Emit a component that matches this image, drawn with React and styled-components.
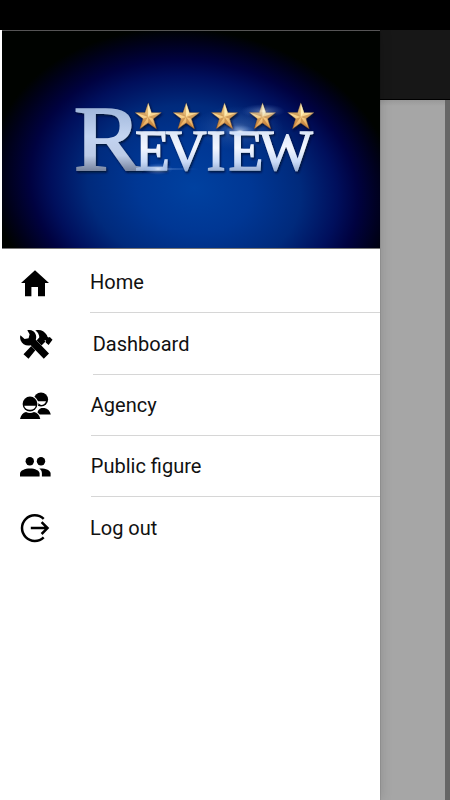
import React from 'react'
import styled, { createGlobalStyle } from 'styled-components';

const GlobalStyle = createGlobalStyle`
  * {
    box-sizing: border-box;
  }
  body {
    margin: 0;
    background: #a6a6a6;
    font-family: Roboto, sans-serif;
  }
`

const Screen = styled.div`
  position: relative;
  width: 450px;
  height: 800px;
  overflow: hidden;
  display: flex;
  flex-direction: column;
  background: #a6a6a6;
`

const StatusBar = styled.div`
  height: 30px;
  flex: none;
  background: #000;
`

const TitleBar = styled.div`
  height: 70px;
  flex: none;
  background: #171717;
  border-bottom: 1px solid #000;
`

const Content = styled.div`
  flex: 1;
  border-right: 5px solid #666;
  background: linear-gradient(#999, #a6a6a6 6px);
`

const Drawer = styled.aside`
  position: absolute;
  top: 30px;
  left: 0;
  bottom: 0;
  width: 380px;
  background: #fff;
  box-shadow: 0 0 12px rgba(0, 0, 0, 0.16), 0 0 1px rgba(0, 0, 0, 0.4);
`

const Banner = styled.div`
  height: 219px;
  padding-left: 1.5px;
  & > svg {
    display: block;
  }
`

const Menu = styled.ul`
  margin: 0;
  padding: 3px 0 0;
  list-style: none;
`

const Item = styled.li`
  display: flex;
  height: 61.35px;
`

const IconBox = styled.span`
  flex: none;
  width: ${props => props.$width}px;
  padding: 11px 0 0 15px;
  & > svg {
    display: block;
  }
`

const Label = styled.span`
  flex: 1;
  padding-top: 18.3px;
  font-size: 20px;
  line-height: 24px;
  white-space: nowrap;
  color: #111;
  border-bottom: ${props => (props.$last ? 'none' : '1px solid #d6d6d6')};
`

function Icon({ children }) {
  return (
    <svg width="40" height="40" viewBox="0 0 40 40">
      {children}
    </svg>
  )
}

const HomeIcon = () => (
  <Icon>
    <path d="M20 7.2 34 20h-4v13.3h-7V24h-6.6v9.3H10V20H6z" />
  </Icon>
)

const ToolsIcon = () => (
  <Icon>
    <path d="M20.300 6.400C25 5 29.300 6.800 31.800 11l.8 1.900 1.200.6 1-.5 2.700 2.700-3.900 5.200-2.900-2.500.2-1.800c-.9-.8-1.800-.7-2.600 0L13.500 34.800l-5-4.500 15.900-16.700c-.2-3.200-1.500-5.700-4.100-7.200z" />
    <path d="M26 11.500l4.500 6-8 8-4-4z" />
    <path
      d="M12.300 6.300c3.800-.9 7.500.9 8.600 4.600.5 1.700.4 3.200-.1 4.800L34 29.600l-5.200 5.200-13-13.600c-4.200 1.200-8.600-.8-10.200-5-.6-1.800-.6-3.400-.2-4.900l4.200 3.800 4-.9 1-3.900z"
      stroke="#fff"
      strokeWidth=".7"
      paintOrder="stroke"
    />
  </Icon>
)

const AgencyIcon = () => (
  <Icon>
    <path d="M22 28.600c.6-4.300 2.500-6.600 5.500-6.600h2c3.200.4 5.400 2.700 6.300 6.600z" />
    <circle cx="26" cy="13.500" r="7.100" />
    <path d="M20 15.200h11c-.6 2.200-2.500 3.700-5 3.700z" fill="#fff" />
    <path
      d="M5 32.900c1-3.800 3-6.200 6-6.900 2.700 1.200 5.300 1.200 8 0 3.300.7 5.400 3.100 6.300 6.900z"
      stroke="#fff"
      strokeWidth="2"
      paintOrder="stroke"
    />
    <circle cx="15" cy="18" r="7.400" stroke="#fff" strokeWidth="2" paintOrder="stroke" />
    <path d="M9.200 19.800h11.600c-.6 2.500-2.700 4-5.800 4s-5.200-1.500-5.800-4z" fill="#fff" />
  </Icon>
)

const PeopleIcon = () => (
  <Icon>
    <circle cx="14.800" cy="14.200" r="4.200" />
    <circle cx="26" cy="14.200" r="4.200" />
    <path d="M5 29.600v-3.200c0-3 5-5 10-5s9.600 2 9.600 5v3.200z" />
    <path d="M24.300 21.500c5.700-.4 11.300 1.700 11.300 4.800v3.300h-8.700v-3.300c0-2-1-3.600-2.600-4.800z" />
  </Icon>
)

const LogoutIcon = () => (
  <Icon>
    <g fill="none" stroke="#000" strokeWidth="2.5">
      <path d="M28.700 10.900A12.800 12.800 0 1 0 28.700 29.300" />
      <path d="M15.800 20.100h16.300M26.600 14.200l5.900 5.900-5.900 5.900" />
    </g>
  </Icon>
)

const STARS = [146.2, 184.2, 222.5, 260.5, 298.8]

// One star, drawn around its own centre, with shaded facets
function Star({ x }) {
  return (
    <g transform={`translate(${x} 87)`}>
      <path
        d="M0-14.300 3.200-4.400H13.300L5.200 1.800 8.400 12 0 5.900-8.400 12-5.200 1.800-13.300-4.400H-3.200z"
        fill="url(#gold)"
        stroke="#392a38"
        strokeWidth=".4"
      />
      <path d="M13-4.400 0 0l5.200 1.800zM8.400 12 0 0v5.900zM-8.400 12 0 0-5.200 1.800zM-13-4.400 0 0-3.200-4.400z" fill="#a05a20" opacity=".42" />
      <path d="M0-14V0l-3.200-4.400z" fill="#b5752d" opacity=".35" />
      <path d="M0-14V0l3.200-4.400z" fill="#fff2bf" opacity=".7" />
    </g>
  )
}

function ReviewLogo() {
  return (
    <svg width="378.5" height="219" viewBox="0 0 378.5 219">
      <defs>
        <radialGradient id="night" gradientUnits="userSpaceOnUse" cx="0" cy="0" r="1" gradientTransform="translate(192 158) rotate(10) scale(206 158)">
          <stop offset="0" stopColor="#0041a0" />
          <stop offset=".28" stopColor="#003794" />
          <stop offset=".52" stopColor="#002a7c" />
          <stop offset=".7" stopColor="#000f5c" />
          <stop offset=".8" stopColor="#000240" />
          <stop offset=".92" stopColor="#00011a" />
          <stop offset="1" stopColor="#000300" />
        </radialGradient>
        <linearGradient id="steel" gradientUnits="userSpaceOnUse" x1="0" y1="77" x2="0" y2="142">
          <stop offset="0" stopColor="#9fb6da" />
          <stop offset=".45" stopColor="#c3d4f1" />
          <stop offset=".75" stopColor="#bccbe6" />
          <stop offset="1" stopColor="#717e99" />
        </linearGradient>
        <linearGradient id="silver" gradientUnits="userSpaceOnUse" x1="0" y1="102" x2="0" y2="142">
          <stop offset="0" stopColor="#dfe8f8" />
          <stop offset=".4" stopColor="#f2f6ff" />
          <stop offset=".75" stopColor="#c9daf7" />
          <stop offset="1" stopColor="#94a9cd" />
        </linearGradient>
        <linearGradient id="gold" x1="0" y1="0" x2="0" y2="1">
          <stop offset="0" stopColor="#fff0ae" />
          <stop offset=".45" stopColor="#fbd993" />
          <stop offset="1" stopColor="#e29a48" />
        </linearGradient>
        <radialGradient id="flare">
          <stop offset="0" stopColor="#fff" stopOpacity=".95" />
          <stop offset=".25" stopColor="#cfe2ff" stopOpacity=".5" />
          <stop offset="1" stopColor="#6da5ff" stopOpacity="0" />
        </radialGradient>
        <filter id="drop" x="-10%" y="-10%" width="120%" height="130%">
          <feDropShadow dx="1" dy="1.5" stdDeviation="1" floodColor="#000726" floodOpacity=".9" />
        </filter>
      </defs>
      <rect width="378.5" height="219" fill="#000300" />
      <rect width="378.5" height="219" fill="url(#night)" />
      <ellipse cx="236" cy="98" rx="46" ry="22" fill="url(#flare)" opacity=".3" />
      <g fontFamily="'Liberation Serif', serif" filter="url(#drop)">
        <text x="71.5" y="140" fontSize="94" textLength="69" lengthAdjust="spacingAndGlyphs" fill="url(#steel)" stroke="url(#steel)" strokeWidth="1.6">R</text>
        <text x="133 163.5 204.5 226.5 257" y="140" fontSize="57" fill="url(#silver)" stroke="url(#silver)" strokeWidth="1.3">EVIEW</text>
      </g>
      <g filter="url(#drop)">
        {STARS.map(x => <Star key={x} x={x} />)}
      </g>
      <ellipse cx="156" cy="139" rx="15" ry="6" fill="url(#flare)" opacity=".8" />
      <ellipse cx="166" cy="139" rx="34" ry="1.2" fill="url(#flare)" opacity=".5" />
      <ellipse cx="238" cy="101" rx="15" ry="6" fill="url(#flare)" opacity=".8" />
      <ellipse cx="261" cy="81" rx="22" ry="7" fill="url(#flare)" opacity=".55" />
      <rect width="378.5" height="1" fill="#555" />
      <rect y="218" width="378.5" height="1" fill="#777" />
    </svg>
  )
}

const items = [
  { label: 'Home', icon: HomeIcon, width: 90 },
  { label: 'Dashboard', icon: ToolsIcon, width: 92.7 },
  { label: 'Agency', icon: AgencyIcon, width: 90.8 },
  { label: 'Public figure', icon: PeopleIcon, width: 90.8 },
  { label: 'Log out', icon: LogoutIcon, width: 90 },
]

export default function App() {
  return (
    <>
      <GlobalStyle />
      <Screen>
        <StatusBar />
        <TitleBar />
        <Content />
        <Drawer>
          <Banner>
            <ReviewLogo />
          </Banner>
          <Menu>
            {items.map((item, i) => (
              <Item key={item.label}>
                <IconBox $width={item.width}>
                  <item.icon />
                </IconBox>
                <Label $last={i === items.length - 1}>{item.label}</Label>
              </Item>
            ))}
          </Menu>
        </Drawer>
      </Screen>
    </>
  )
}
